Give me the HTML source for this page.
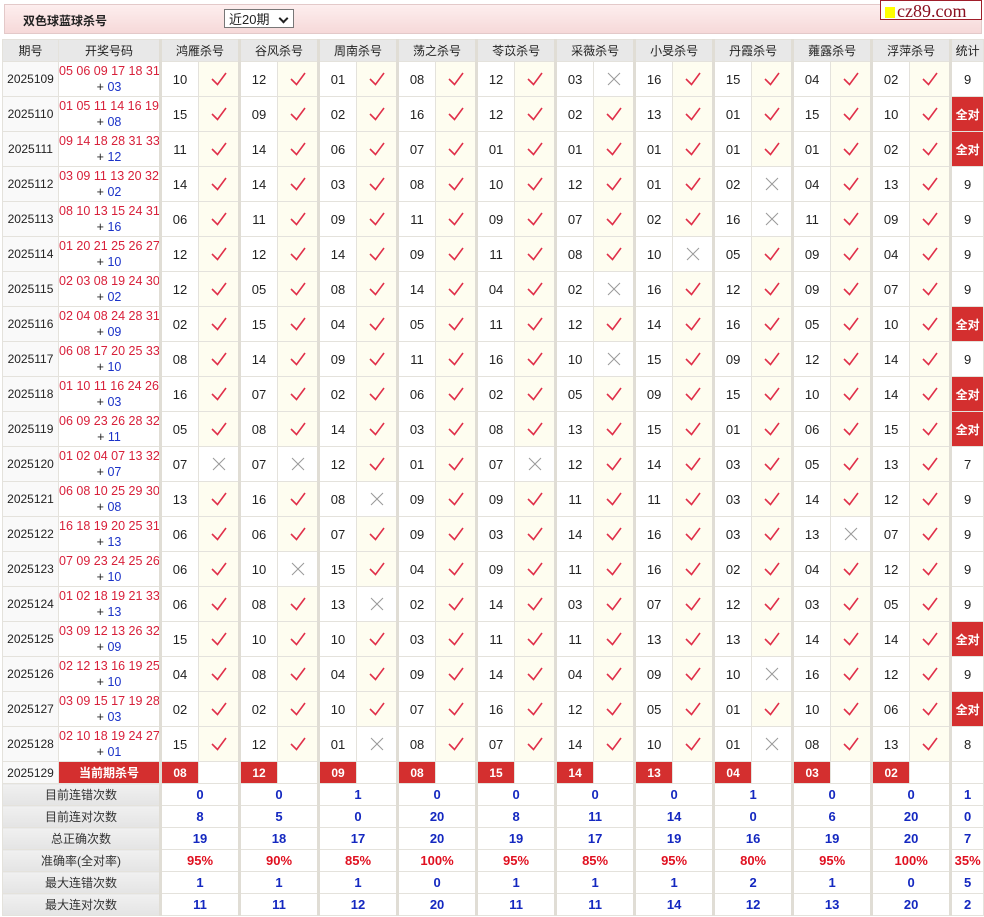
<!DOCTYPE html>
<html><head><meta charset="utf-8"><style>
body{margin:0;background:#fff;font-family:"Liberation Sans","Noto Sans CJK SC",sans-serif;width:984px;height:917px;overflow:hidden;position:relative}
.hd{position:absolute;left:4px;top:4px;width:976px;height:28px;background:linear-gradient(#fdeeee,#f6d9d9);border:1px solid #e3c9c9}
.hd .t{position:absolute;left:18px;top:7px;font-size:12px;font-weight:bold;color:#222}
.sel{position:absolute;left:219px;top:4px;width:70px;height:19px;border:1px solid #777;background:#fff;font-size:13px;line-height:19px;box-sizing:border-box;padding-left:4px;color:#222}
.sel:after{content:"";position:absolute;right:6px;top:5px;width:5px;height:5px;border-right:2px solid #222;border-bottom:2px solid #222;transform:rotate(45deg)}
.logo{position:absolute;left:880px;top:0;width:102px;height:20px;border:1px solid #a01e2a;background:#fff;font-family:"Liberation Serif",serif;font-size:18px;color:#8b1020;line-height:20px;box-sizing:border-box}
.logo span{display:inline-block;width:10px;height:11px;background:#ff0;margin:0 2px 0 4px;vertical-align:-1px}
table{position:absolute;left:2px;top:39px;border-collapse:collapse;table-layout:fixed;width:981px}
td{border:1px solid #e4e2dc;text-align:center;font-size:13px;padding:0;color:#222;overflow:hidden;white-space:nowrap}
tr.h td{height:21px;background:#e8e8e8;font-size:12px;color:#222}
tr.r td{height:34px}
.p{background:#f9f9f9;font-size:12px}
.n{color:#d8203a;line-height:16px;font-size:12.5px}
.n i{font-style:normal;color:#1a32c8}
.n b{font-weight:normal;color:#222}
.g,.hg{border-left:3px solid #e0ddd5}
.c{background:#fefdf0}
.x{background:#fff}
.a{background:#d42f2f;color:#fff;font-weight:bold;font-size:12px}
svg{display:block;margin:auto}
tr.cur td{height:21px}
.cn{background:#d42f2f;color:#fff;font-weight:bold;font-size:12px}
tr.s td{height:21px;font-weight:bold;color:#1428c0;font-size:13px}
tr.s td.l{background:linear-gradient(#f0f0f0,#e4e4e4);color:#333;font-weight:normal;font-size:12px}
tr.s.pc td{color:#e01020}
tr.s.pc td.l{color:#333}
</style></head><body>
<svg width="0" height="0" style="position:absolute"><defs>
<symbol id="k" viewBox="0 0 20 18"><path d="M3 9 L8.5 14.5 L17 3" fill="none" stroke="#e0304a" stroke-width="1.6"/></symbol>
<symbol id="q" viewBox="0 0 20 18"><path d="M4 3 L16 15 M16 3 L4 15" fill="none" stroke="#999" stroke-width="1"/></symbol>
</defs></svg>
<div class="hd"><div class="t">双色球蓝球杀号</div><div class="sel">近20期</div></div>
<div class="logo"><span></span>cz89.com</div>
<table>
<colgroup><col style="width:56px"><col style="width:102px">
<col style="width:38px"><col style="width:41px"><col style="width:38px"><col style="width:41px"><col style="width:38px"><col style="width:41px"><col style="width:38px"><col style="width:41px"><col style="width:38px"><col style="width:41px"><col style="width:38px"><col style="width:41px"><col style="width:38px"><col style="width:41px"><col style="width:38px"><col style="width:41px"><col style="width:38px"><col style="width:41px"><col style="width:38px"><col style="width:41px"><col style="width:33px"></colgroup>
<tr class="h"><td>期号</td><td>开奖号码</td><td class="hg" colspan="2">鸿雁杀号</td><td class="hg" colspan="2">谷风杀号</td><td class="hg" colspan="2">周南杀号</td><td class="hg" colspan="2">荡之杀号</td><td class="hg" colspan="2">苓苡杀号</td><td class="hg" colspan="2">采薇杀号</td><td class="hg" colspan="2">小旻杀号</td><td class="hg" colspan="2">丹霞杀号</td><td class="hg" colspan="2">蕹露杀号</td><td class="hg" colspan="2">浮萍杀号</td><td class="hg">统计</td></tr>
<tr class="r"><td class="p">2025109</td><td class="n">05 06 09 17 18 31<br><b>+</b> <i>03</i></td><td class="g">10</td><td class="c"><svg width="20" height="18"><use href="#k"/></svg></td><td class="g">12</td><td class="c"><svg width="20" height="18"><use href="#k"/></svg></td><td class="g">01</td><td class="c"><svg width="20" height="18"><use href="#k"/></svg></td><td class="g">08</td><td class="c"><svg width="20" height="18"><use href="#k"/></svg></td><td class="g">12</td><td class="c"><svg width="20" height="18"><use href="#k"/></svg></td><td class="g">03</td><td class="x"><svg width="20" height="18"><use href="#q"/></svg></td><td class="g">16</td><td class="c"><svg width="20" height="18"><use href="#k"/></svg></td><td class="g">15</td><td class="c"><svg width="20" height="18"><use href="#k"/></svg></td><td class="g">04</td><td class="c"><svg width="20" height="18"><use href="#k"/></svg></td><td class="g">02</td><td class="c"><svg width="20" height="18"><use href="#k"/></svg></td><td class="g">9</td></tr>
<tr class="r"><td class="p">2025110</td><td class="n">01 05 11 14 16 19<br><b>+</b> <i>08</i></td><td class="g">15</td><td class="c"><svg width="20" height="18"><use href="#k"/></svg></td><td class="g">09</td><td class="c"><svg width="20" height="18"><use href="#k"/></svg></td><td class="g">02</td><td class="c"><svg width="20" height="18"><use href="#k"/></svg></td><td class="g">16</td><td class="c"><svg width="20" height="18"><use href="#k"/></svg></td><td class="g">12</td><td class="c"><svg width="20" height="18"><use href="#k"/></svg></td><td class="g">02</td><td class="c"><svg width="20" height="18"><use href="#k"/></svg></td><td class="g">13</td><td class="c"><svg width="20" height="18"><use href="#k"/></svg></td><td class="g">01</td><td class="c"><svg width="20" height="18"><use href="#k"/></svg></td><td class="g">15</td><td class="c"><svg width="20" height="18"><use href="#k"/></svg></td><td class="g">10</td><td class="c"><svg width="20" height="18"><use href="#k"/></svg></td><td class="g a">全对</td></tr>
<tr class="r"><td class="p">2025111</td><td class="n">09 14 18 28 31 33<br><b>+</b> <i>12</i></td><td class="g">11</td><td class="c"><svg width="20" height="18"><use href="#k"/></svg></td><td class="g">14</td><td class="c"><svg width="20" height="18"><use href="#k"/></svg></td><td class="g">06</td><td class="c"><svg width="20" height="18"><use href="#k"/></svg></td><td class="g">07</td><td class="c"><svg width="20" height="18"><use href="#k"/></svg></td><td class="g">01</td><td class="c"><svg width="20" height="18"><use href="#k"/></svg></td><td class="g">01</td><td class="c"><svg width="20" height="18"><use href="#k"/></svg></td><td class="g">01</td><td class="c"><svg width="20" height="18"><use href="#k"/></svg></td><td class="g">01</td><td class="c"><svg width="20" height="18"><use href="#k"/></svg></td><td class="g">01</td><td class="c"><svg width="20" height="18"><use href="#k"/></svg></td><td class="g">02</td><td class="c"><svg width="20" height="18"><use href="#k"/></svg></td><td class="g a">全对</td></tr>
<tr class="r"><td class="p">2025112</td><td class="n">03 09 11 13 20 32<br><b>+</b> <i>02</i></td><td class="g">14</td><td class="c"><svg width="20" height="18"><use href="#k"/></svg></td><td class="g">14</td><td class="c"><svg width="20" height="18"><use href="#k"/></svg></td><td class="g">03</td><td class="c"><svg width="20" height="18"><use href="#k"/></svg></td><td class="g">08</td><td class="c"><svg width="20" height="18"><use href="#k"/></svg></td><td class="g">10</td><td class="c"><svg width="20" height="18"><use href="#k"/></svg></td><td class="g">12</td><td class="c"><svg width="20" height="18"><use href="#k"/></svg></td><td class="g">01</td><td class="c"><svg width="20" height="18"><use href="#k"/></svg></td><td class="g">02</td><td class="x"><svg width="20" height="18"><use href="#q"/></svg></td><td class="g">04</td><td class="c"><svg width="20" height="18"><use href="#k"/></svg></td><td class="g">13</td><td class="c"><svg width="20" height="18"><use href="#k"/></svg></td><td class="g">9</td></tr>
<tr class="r"><td class="p">2025113</td><td class="n">08 10 13 15 24 31<br><b>+</b> <i>16</i></td><td class="g">06</td><td class="c"><svg width="20" height="18"><use href="#k"/></svg></td><td class="g">11</td><td class="c"><svg width="20" height="18"><use href="#k"/></svg></td><td class="g">09</td><td class="c"><svg width="20" height="18"><use href="#k"/></svg></td><td class="g">11</td><td class="c"><svg width="20" height="18"><use href="#k"/></svg></td><td class="g">09</td><td class="c"><svg width="20" height="18"><use href="#k"/></svg></td><td class="g">07</td><td class="c"><svg width="20" height="18"><use href="#k"/></svg></td><td class="g">02</td><td class="c"><svg width="20" height="18"><use href="#k"/></svg></td><td class="g">16</td><td class="x"><svg width="20" height="18"><use href="#q"/></svg></td><td class="g">11</td><td class="c"><svg width="20" height="18"><use href="#k"/></svg></td><td class="g">09</td><td class="c"><svg width="20" height="18"><use href="#k"/></svg></td><td class="g">9</td></tr>
<tr class="r"><td class="p">2025114</td><td class="n">01 20 21 25 26 27<br><b>+</b> <i>10</i></td><td class="g">12</td><td class="c"><svg width="20" height="18"><use href="#k"/></svg></td><td class="g">12</td><td class="c"><svg width="20" height="18"><use href="#k"/></svg></td><td class="g">14</td><td class="c"><svg width="20" height="18"><use href="#k"/></svg></td><td class="g">09</td><td class="c"><svg width="20" height="18"><use href="#k"/></svg></td><td class="g">11</td><td class="c"><svg width="20" height="18"><use href="#k"/></svg></td><td class="g">08</td><td class="c"><svg width="20" height="18"><use href="#k"/></svg></td><td class="g">10</td><td class="x"><svg width="20" height="18"><use href="#q"/></svg></td><td class="g">05</td><td class="c"><svg width="20" height="18"><use href="#k"/></svg></td><td class="g">09</td><td class="c"><svg width="20" height="18"><use href="#k"/></svg></td><td class="g">04</td><td class="c"><svg width="20" height="18"><use href="#k"/></svg></td><td class="g">9</td></tr>
<tr class="r"><td class="p">2025115</td><td class="n">02 03 08 19 24 30<br><b>+</b> <i>02</i></td><td class="g">12</td><td class="c"><svg width="20" height="18"><use href="#k"/></svg></td><td class="g">05</td><td class="c"><svg width="20" height="18"><use href="#k"/></svg></td><td class="g">08</td><td class="c"><svg width="20" height="18"><use href="#k"/></svg></td><td class="g">14</td><td class="c"><svg width="20" height="18"><use href="#k"/></svg></td><td class="g">04</td><td class="c"><svg width="20" height="18"><use href="#k"/></svg></td><td class="g">02</td><td class="x"><svg width="20" height="18"><use href="#q"/></svg></td><td class="g">16</td><td class="c"><svg width="20" height="18"><use href="#k"/></svg></td><td class="g">12</td><td class="c"><svg width="20" height="18"><use href="#k"/></svg></td><td class="g">09</td><td class="c"><svg width="20" height="18"><use href="#k"/></svg></td><td class="g">07</td><td class="c"><svg width="20" height="18"><use href="#k"/></svg></td><td class="g">9</td></tr>
<tr class="r"><td class="p">2025116</td><td class="n">02 04 08 24 28 31<br><b>+</b> <i>09</i></td><td class="g">02</td><td class="c"><svg width="20" height="18"><use href="#k"/></svg></td><td class="g">15</td><td class="c"><svg width="20" height="18"><use href="#k"/></svg></td><td class="g">04</td><td class="c"><svg width="20" height="18"><use href="#k"/></svg></td><td class="g">05</td><td class="c"><svg width="20" height="18"><use href="#k"/></svg></td><td class="g">11</td><td class="c"><svg width="20" height="18"><use href="#k"/></svg></td><td class="g">12</td><td class="c"><svg width="20" height="18"><use href="#k"/></svg></td><td class="g">14</td><td class="c"><svg width="20" height="18"><use href="#k"/></svg></td><td class="g">16</td><td class="c"><svg width="20" height="18"><use href="#k"/></svg></td><td class="g">05</td><td class="c"><svg width="20" height="18"><use href="#k"/></svg></td><td class="g">10</td><td class="c"><svg width="20" height="18"><use href="#k"/></svg></td><td class="g a">全对</td></tr>
<tr class="r"><td class="p">2025117</td><td class="n">06 08 17 20 25 33<br><b>+</b> <i>10</i></td><td class="g">08</td><td class="c"><svg width="20" height="18"><use href="#k"/></svg></td><td class="g">14</td><td class="c"><svg width="20" height="18"><use href="#k"/></svg></td><td class="g">09</td><td class="c"><svg width="20" height="18"><use href="#k"/></svg></td><td class="g">11</td><td class="c"><svg width="20" height="18"><use href="#k"/></svg></td><td class="g">16</td><td class="c"><svg width="20" height="18"><use href="#k"/></svg></td><td class="g">10</td><td class="x"><svg width="20" height="18"><use href="#q"/></svg></td><td class="g">15</td><td class="c"><svg width="20" height="18"><use href="#k"/></svg></td><td class="g">09</td><td class="c"><svg width="20" height="18"><use href="#k"/></svg></td><td class="g">12</td><td class="c"><svg width="20" height="18"><use href="#k"/></svg></td><td class="g">14</td><td class="c"><svg width="20" height="18"><use href="#k"/></svg></td><td class="g">9</td></tr>
<tr class="r"><td class="p">2025118</td><td class="n">01 10 11 16 24 26<br><b>+</b> <i>03</i></td><td class="g">16</td><td class="c"><svg width="20" height="18"><use href="#k"/></svg></td><td class="g">07</td><td class="c"><svg width="20" height="18"><use href="#k"/></svg></td><td class="g">02</td><td class="c"><svg width="20" height="18"><use href="#k"/></svg></td><td class="g">06</td><td class="c"><svg width="20" height="18"><use href="#k"/></svg></td><td class="g">02</td><td class="c"><svg width="20" height="18"><use href="#k"/></svg></td><td class="g">05</td><td class="c"><svg width="20" height="18"><use href="#k"/></svg></td><td class="g">09</td><td class="c"><svg width="20" height="18"><use href="#k"/></svg></td><td class="g">15</td><td class="c"><svg width="20" height="18"><use href="#k"/></svg></td><td class="g">10</td><td class="c"><svg width="20" height="18"><use href="#k"/></svg></td><td class="g">14</td><td class="c"><svg width="20" height="18"><use href="#k"/></svg></td><td class="g a">全对</td></tr>
<tr class="r"><td class="p">2025119</td><td class="n">06 09 23 26 28 32<br><b>+</b> <i>11</i></td><td class="g">05</td><td class="c"><svg width="20" height="18"><use href="#k"/></svg></td><td class="g">08</td><td class="c"><svg width="20" height="18"><use href="#k"/></svg></td><td class="g">14</td><td class="c"><svg width="20" height="18"><use href="#k"/></svg></td><td class="g">03</td><td class="c"><svg width="20" height="18"><use href="#k"/></svg></td><td class="g">08</td><td class="c"><svg width="20" height="18"><use href="#k"/></svg></td><td class="g">13</td><td class="c"><svg width="20" height="18"><use href="#k"/></svg></td><td class="g">15</td><td class="c"><svg width="20" height="18"><use href="#k"/></svg></td><td class="g">01</td><td class="c"><svg width="20" height="18"><use href="#k"/></svg></td><td class="g">06</td><td class="c"><svg width="20" height="18"><use href="#k"/></svg></td><td class="g">15</td><td class="c"><svg width="20" height="18"><use href="#k"/></svg></td><td class="g a">全对</td></tr>
<tr class="r"><td class="p">2025120</td><td class="n">01 02 04 07 13 32<br><b>+</b> <i>07</i></td><td class="g">07</td><td class="x"><svg width="20" height="18"><use href="#q"/></svg></td><td class="g">07</td><td class="x"><svg width="20" height="18"><use href="#q"/></svg></td><td class="g">12</td><td class="c"><svg width="20" height="18"><use href="#k"/></svg></td><td class="g">01</td><td class="c"><svg width="20" height="18"><use href="#k"/></svg></td><td class="g">07</td><td class="x"><svg width="20" height="18"><use href="#q"/></svg></td><td class="g">12</td><td class="c"><svg width="20" height="18"><use href="#k"/></svg></td><td class="g">14</td><td class="c"><svg width="20" height="18"><use href="#k"/></svg></td><td class="g">03</td><td class="c"><svg width="20" height="18"><use href="#k"/></svg></td><td class="g">05</td><td class="c"><svg width="20" height="18"><use href="#k"/></svg></td><td class="g">13</td><td class="c"><svg width="20" height="18"><use href="#k"/></svg></td><td class="g">7</td></tr>
<tr class="r"><td class="p">2025121</td><td class="n">06 08 10 25 29 30<br><b>+</b> <i>08</i></td><td class="g">13</td><td class="c"><svg width="20" height="18"><use href="#k"/></svg></td><td class="g">16</td><td class="c"><svg width="20" height="18"><use href="#k"/></svg></td><td class="g">08</td><td class="x"><svg width="20" height="18"><use href="#q"/></svg></td><td class="g">09</td><td class="c"><svg width="20" height="18"><use href="#k"/></svg></td><td class="g">09</td><td class="c"><svg width="20" height="18"><use href="#k"/></svg></td><td class="g">11</td><td class="c"><svg width="20" height="18"><use href="#k"/></svg></td><td class="g">11</td><td class="c"><svg width="20" height="18"><use href="#k"/></svg></td><td class="g">03</td><td class="c"><svg width="20" height="18"><use href="#k"/></svg></td><td class="g">14</td><td class="c"><svg width="20" height="18"><use href="#k"/></svg></td><td class="g">12</td><td class="c"><svg width="20" height="18"><use href="#k"/></svg></td><td class="g">9</td></tr>
<tr class="r"><td class="p">2025122</td><td class="n">16 18 19 20 25 31<br><b>+</b> <i>13</i></td><td class="g">06</td><td class="c"><svg width="20" height="18"><use href="#k"/></svg></td><td class="g">06</td><td class="c"><svg width="20" height="18"><use href="#k"/></svg></td><td class="g">07</td><td class="c"><svg width="20" height="18"><use href="#k"/></svg></td><td class="g">09</td><td class="c"><svg width="20" height="18"><use href="#k"/></svg></td><td class="g">03</td><td class="c"><svg width="20" height="18"><use href="#k"/></svg></td><td class="g">14</td><td class="c"><svg width="20" height="18"><use href="#k"/></svg></td><td class="g">16</td><td class="c"><svg width="20" height="18"><use href="#k"/></svg></td><td class="g">03</td><td class="c"><svg width="20" height="18"><use href="#k"/></svg></td><td class="g">13</td><td class="x"><svg width="20" height="18"><use href="#q"/></svg></td><td class="g">07</td><td class="c"><svg width="20" height="18"><use href="#k"/></svg></td><td class="g">9</td></tr>
<tr class="r"><td class="p">2025123</td><td class="n">07 09 23 24 25 26<br><b>+</b> <i>10</i></td><td class="g">06</td><td class="c"><svg width="20" height="18"><use href="#k"/></svg></td><td class="g">10</td><td class="x"><svg width="20" height="18"><use href="#q"/></svg></td><td class="g">15</td><td class="c"><svg width="20" height="18"><use href="#k"/></svg></td><td class="g">04</td><td class="c"><svg width="20" height="18"><use href="#k"/></svg></td><td class="g">09</td><td class="c"><svg width="20" height="18"><use href="#k"/></svg></td><td class="g">11</td><td class="c"><svg width="20" height="18"><use href="#k"/></svg></td><td class="g">16</td><td class="c"><svg width="20" height="18"><use href="#k"/></svg></td><td class="g">02</td><td class="c"><svg width="20" height="18"><use href="#k"/></svg></td><td class="g">04</td><td class="c"><svg width="20" height="18"><use href="#k"/></svg></td><td class="g">12</td><td class="c"><svg width="20" height="18"><use href="#k"/></svg></td><td class="g">9</td></tr>
<tr class="r"><td class="p">2025124</td><td class="n">01 02 18 19 21 33<br><b>+</b> <i>13</i></td><td class="g">06</td><td class="c"><svg width="20" height="18"><use href="#k"/></svg></td><td class="g">08</td><td class="c"><svg width="20" height="18"><use href="#k"/></svg></td><td class="g">13</td><td class="x"><svg width="20" height="18"><use href="#q"/></svg></td><td class="g">02</td><td class="c"><svg width="20" height="18"><use href="#k"/></svg></td><td class="g">14</td><td class="c"><svg width="20" height="18"><use href="#k"/></svg></td><td class="g">03</td><td class="c"><svg width="20" height="18"><use href="#k"/></svg></td><td class="g">07</td><td class="c"><svg width="20" height="18"><use href="#k"/></svg></td><td class="g">12</td><td class="c"><svg width="20" height="18"><use href="#k"/></svg></td><td class="g">03</td><td class="c"><svg width="20" height="18"><use href="#k"/></svg></td><td class="g">05</td><td class="c"><svg width="20" height="18"><use href="#k"/></svg></td><td class="g">9</td></tr>
<tr class="r"><td class="p">2025125</td><td class="n">03 09 12 13 26 32<br><b>+</b> <i>09</i></td><td class="g">15</td><td class="c"><svg width="20" height="18"><use href="#k"/></svg></td><td class="g">10</td><td class="c"><svg width="20" height="18"><use href="#k"/></svg></td><td class="g">10</td><td class="c"><svg width="20" height="18"><use href="#k"/></svg></td><td class="g">03</td><td class="c"><svg width="20" height="18"><use href="#k"/></svg></td><td class="g">11</td><td class="c"><svg width="20" height="18"><use href="#k"/></svg></td><td class="g">11</td><td class="c"><svg width="20" height="18"><use href="#k"/></svg></td><td class="g">13</td><td class="c"><svg width="20" height="18"><use href="#k"/></svg></td><td class="g">13</td><td class="c"><svg width="20" height="18"><use href="#k"/></svg></td><td class="g">14</td><td class="c"><svg width="20" height="18"><use href="#k"/></svg></td><td class="g">14</td><td class="c"><svg width="20" height="18"><use href="#k"/></svg></td><td class="g a">全对</td></tr>
<tr class="r"><td class="p">2025126</td><td class="n">02 12 13 16 19 25<br><b>+</b> <i>10</i></td><td class="g">04</td><td class="c"><svg width="20" height="18"><use href="#k"/></svg></td><td class="g">08</td><td class="c"><svg width="20" height="18"><use href="#k"/></svg></td><td class="g">04</td><td class="c"><svg width="20" height="18"><use href="#k"/></svg></td><td class="g">09</td><td class="c"><svg width="20" height="18"><use href="#k"/></svg></td><td class="g">14</td><td class="c"><svg width="20" height="18"><use href="#k"/></svg></td><td class="g">04</td><td class="c"><svg width="20" height="18"><use href="#k"/></svg></td><td class="g">09</td><td class="c"><svg width="20" height="18"><use href="#k"/></svg></td><td class="g">10</td><td class="x"><svg width="20" height="18"><use href="#q"/></svg></td><td class="g">16</td><td class="c"><svg width="20" height="18"><use href="#k"/></svg></td><td class="g">12</td><td class="c"><svg width="20" height="18"><use href="#k"/></svg></td><td class="g">9</td></tr>
<tr class="r"><td class="p">2025127</td><td class="n">03 09 15 17 19 28<br><b>+</b> <i>03</i></td><td class="g">02</td><td class="c"><svg width="20" height="18"><use href="#k"/></svg></td><td class="g">02</td><td class="c"><svg width="20" height="18"><use href="#k"/></svg></td><td class="g">10</td><td class="c"><svg width="20" height="18"><use href="#k"/></svg></td><td class="g">07</td><td class="c"><svg width="20" height="18"><use href="#k"/></svg></td><td class="g">16</td><td class="c"><svg width="20" height="18"><use href="#k"/></svg></td><td class="g">12</td><td class="c"><svg width="20" height="18"><use href="#k"/></svg></td><td class="g">05</td><td class="c"><svg width="20" height="18"><use href="#k"/></svg></td><td class="g">01</td><td class="c"><svg width="20" height="18"><use href="#k"/></svg></td><td class="g">10</td><td class="c"><svg width="20" height="18"><use href="#k"/></svg></td><td class="g">06</td><td class="c"><svg width="20" height="18"><use href="#k"/></svg></td><td class="g a">全对</td></tr>
<tr class="r"><td class="p">2025128</td><td class="n">02 10 18 19 24 27<br><b>+</b> <i>01</i></td><td class="g">15</td><td class="c"><svg width="20" height="18"><use href="#k"/></svg></td><td class="g">12</td><td class="c"><svg width="20" height="18"><use href="#k"/></svg></td><td class="g">01</td><td class="x"><svg width="20" height="18"><use href="#q"/></svg></td><td class="g">08</td><td class="c"><svg width="20" height="18"><use href="#k"/></svg></td><td class="g">07</td><td class="c"><svg width="20" height="18"><use href="#k"/></svg></td><td class="g">14</td><td class="c"><svg width="20" height="18"><use href="#k"/></svg></td><td class="g">10</td><td class="c"><svg width="20" height="18"><use href="#k"/></svg></td><td class="g">01</td><td class="x"><svg width="20" height="18"><use href="#q"/></svg></td><td class="g">08</td><td class="c"><svg width="20" height="18"><use href="#k"/></svg></td><td class="g">13</td><td class="c"><svg width="20" height="18"><use href="#k"/></svg></td><td class="g">8</td></tr>
<tr class="cur"><td class="p">2025129</td><td class="cn">当前期杀号</td><td class="g cn">08</td><td></td><td class="g cn">12</td><td></td><td class="g cn">09</td><td></td><td class="g cn">08</td><td></td><td class="g cn">15</td><td></td><td class="g cn">14</td><td></td><td class="g cn">13</td><td></td><td class="g cn">04</td><td></td><td class="g cn">03</td><td></td><td class="g cn">02</td><td></td><td class="g"></td></tr>
<tr class="s"><td class="l" colspan="2">目前连错次数</td><td class="g" colspan="2">0</td><td class="g" colspan="2">0</td><td class="g" colspan="2">1</td><td class="g" colspan="2">0</td><td class="g" colspan="2">0</td><td class="g" colspan="2">0</td><td class="g" colspan="2">0</td><td class="g" colspan="2">1</td><td class="g" colspan="2">0</td><td class="g" colspan="2">0</td><td class="g">1</td></tr>
<tr class="s"><td class="l" colspan="2">目前连对次数</td><td class="g" colspan="2">8</td><td class="g" colspan="2">5</td><td class="g" colspan="2">0</td><td class="g" colspan="2">20</td><td class="g" colspan="2">8</td><td class="g" colspan="2">11</td><td class="g" colspan="2">14</td><td class="g" colspan="2">0</td><td class="g" colspan="2">6</td><td class="g" colspan="2">20</td><td class="g">0</td></tr>
<tr class="s"><td class="l" colspan="2">总正确次数</td><td class="g" colspan="2">19</td><td class="g" colspan="2">18</td><td class="g" colspan="2">17</td><td class="g" colspan="2">20</td><td class="g" colspan="2">19</td><td class="g" colspan="2">17</td><td class="g" colspan="2">19</td><td class="g" colspan="2">16</td><td class="g" colspan="2">19</td><td class="g" colspan="2">20</td><td class="g">7</td></tr>
<tr class="s pc"><td class="l" colspan="2">准确率(全对率)</td><td class="g" colspan="2">95%</td><td class="g" colspan="2">90%</td><td class="g" colspan="2">85%</td><td class="g" colspan="2">100%</td><td class="g" colspan="2">95%</td><td class="g" colspan="2">85%</td><td class="g" colspan="2">95%</td><td class="g" colspan="2">80%</td><td class="g" colspan="2">95%</td><td class="g" colspan="2">100%</td><td class="g">35%</td></tr>
<tr class="s"><td class="l" colspan="2">最大连错次数</td><td class="g" colspan="2">1</td><td class="g" colspan="2">1</td><td class="g" colspan="2">1</td><td class="g" colspan="2">0</td><td class="g" colspan="2">1</td><td class="g" colspan="2">1</td><td class="g" colspan="2">1</td><td class="g" colspan="2">2</td><td class="g" colspan="2">1</td><td class="g" colspan="2">0</td><td class="g">5</td></tr>
<tr class="s"><td class="l" colspan="2">最大连对次数</td><td class="g" colspan="2">11</td><td class="g" colspan="2">11</td><td class="g" colspan="2">12</td><td class="g" colspan="2">20</td><td class="g" colspan="2">11</td><td class="g" colspan="2">11</td><td class="g" colspan="2">14</td><td class="g" colspan="2">12</td><td class="g" colspan="2">13</td><td class="g" colspan="2">20</td><td class="g">2</td></tr>
</table>
</body></html>
